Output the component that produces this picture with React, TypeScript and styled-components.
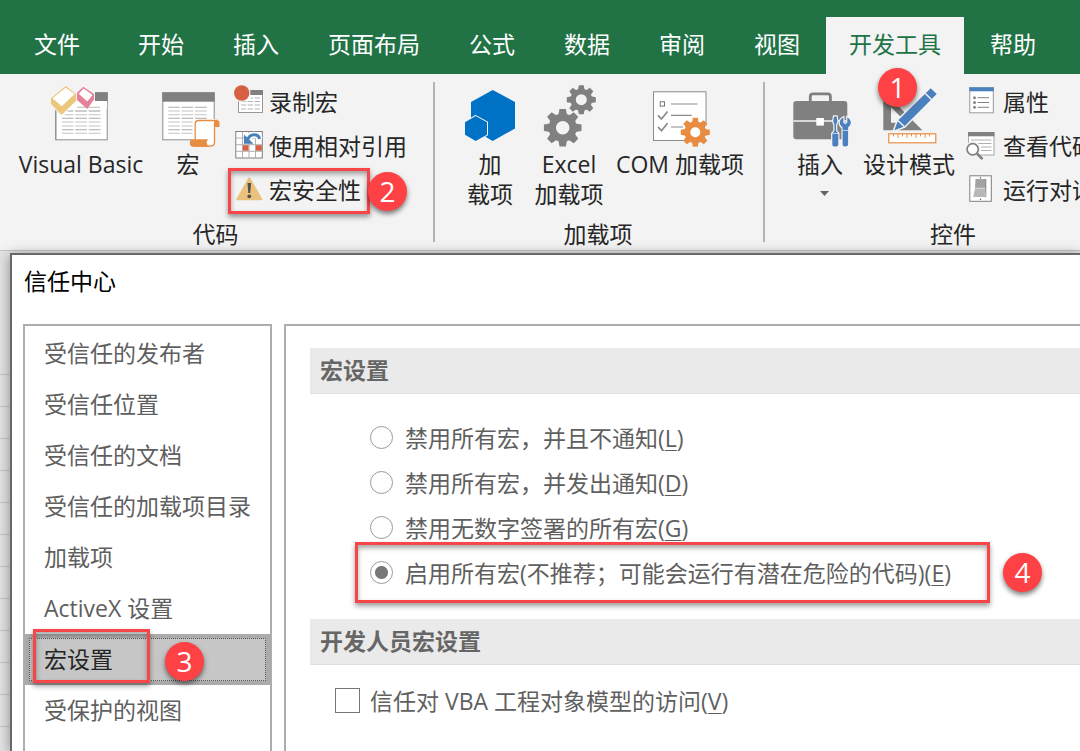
import React, { useState } from 'react';
import styled, { createGlobalStyle, css } from 'styled-components';

const GlobalStyle = createGlobalStyle`
  *, *::before, *::after { box-sizing: border-box; }
  body {
    margin: 0;
    overflow: hidden;
    font-family: "Open Sans", "Noto Sans CJK SC", sans-serif;
    font-size: 23px;
    line-height: 30px;
    color: #262626;
  }
  button { font: inherit; color: inherit; background: none; border: 0; padding: 0; margin: 0; cursor: pointer; }
  svg { display: block; overflow: visible; flex: none; }
`;

const gray = '#808080';
const blue = '#4a80bd';
const orange = '#e88c42';
const red = '#fe4145';

const Page = styled.div`
  display: flex;
  flex-direction: column;
  min-height: 100vh;
  overflow: hidden;
`;

const TabBar = styled.nav`
  display: flex;
  gap: 3px;
  padding: 17px 0 0 11px;
  background: #217346;
`;

const Tab = styled.button<{ $active?: boolean; $file?: boolean }>`
  height: 57px;
  padding: 0 23px 4px;
  margin-right: ${p => (p.$file ? 9 : 0)}px;
  white-space: nowrap;
  color: ${p => (p.$active ? '#217346' : '#fff')};
  background: ${p => (p.$active ? '#f3f3f3' : 'transparent')};
`;

const Ribbon = styled.div`
  display: flex;
  padding: 6px 0 1px;
  background: #f3f3f3;
  border-bottom: 1px solid #c4c4c4;
`;

const Group = styled.section<{ $start: number; $end?: number }>`
  flex: none;
  display: flex;
  flex-direction: column;
  padding: 0 ${p => p.$end ?? 0}px 0 ${p => p.$start}px;
`;

const Divider = styled.div`
  flex: none;
  width: 2px;
  margin: 2px 0 7px;
  background: #b4b4b4;
`;

const GroupTools = styled.div`
  display: flex;
  height: 139px;
`;

const GroupName = styled.h2<{ $pad: number }>`
  margin: 0;
  padding-right: ${p => p.$pad}px;
  font-size: 23px;
  font-weight: 400;
  text-align: center;
`;

const LargeTool = styled.button<{ $width: number }>`
  position: relative;
  width: ${p => p.$width}px;
  padding-top: 4px;
  display: flex;
  flex-direction: column;
  align-items: center;
  justify-content: flex-start;
  white-space: nowrap;
`;

const LargeLabel = styled.span`
  margin-top: -1px;
`;

const ArrowSlot = styled.span`
  display: flex;
  padding: 12px 0 0 8px;
`;

const ToolList = styled.div<{ $width: number }>`
  width: ${p => p.$width}px;
  padding-left: 10px;
  display: flex;
  flex-direction: column;
  align-items: flex-start;
`;

const SmallTool = styled.button`
  position: relative;
  height: 44px;
  display: flex;
  align-items: center;
  gap: 5px;
  white-space: nowrap;
`;

const Outline = styled.span<{ $inset: string }>`
  position: absolute;
  inset: ${p => p.$inset};
  border: 3px solid #f84648;
  box-shadow: 0 3px 5px rgba(0, 0, 0, 0.4), inset 0 3px 5px rgba(0, 0, 0, 0.35);
  pointer-events: none;
`;

const Badge = styled.span<{ $left: string; $top: string }>`
  position: absolute;
  left: ${p => p.$left};
  top: ${p => p.$top};
  z-index: 2;
  width: 39px;
  height: 39px;
  border-radius: 50%;
  display: flex;
  align-items: center;
  justify-content: center;
  background: ${red};
  box-shadow: 0 3px 5px rgba(0, 0, 0, 0.5);
  color: #fff;
  font-size: 28px;
  line-height: 39px;
  pointer-events: none;
`;

const Workspace = styled.div`
  flex: 1;
  display: flex;
  padding: 2px 0 0 10px;
  background:
    linear-gradient(#e3e3e3, #e3e3e3) 0 0 / 100% 110px no-repeat,
    repeating-linear-gradient(to bottom, #e3e3e3 0 27px, #c8c8c8 27px 28px, #e3e3e3 28px 32px);
`;

const Dialog = styled.main`
  position: relative;
  flex: 1;
  min-width: 0;
  display: flex;
  flex-direction: column;
  border: solid #686868;
  border-width: 2px 0 0 2px;
  background: #fff;
  box-shadow: 0 2px 12px rgba(0, 0, 0, 0.4);
`;

const DialogTitle = styled.h1`
  margin: 0;
  padding: 11px 12px 28px;
  font-size: 23px;
  font-weight: 400;
  color: #000;
`;

const DialogBody = styled.div`
  flex: 1;
  display: flex;
  gap: 12px;
  padding-left: 11px;
`;

const Sidebar = styled.div`
  flex: none;
  width: 249px;
  padding-top: 2px;
  display: flex;
  flex-direction: column;
  border: solid #adadad;
  border-width: 2px 2px 0;
`;

const SidebarItem = styled.button<{ $selected: boolean }>`
  position: relative;
  height: 51px;
  padding: 0 0 2px 19px;
  text-align: left;
  color: #5f5f5f;
  ${p => p.$selected && css`
    color: #262626;
    background: #c6c6c6;
    box-shadow: inset 0 0 0 4px #ababab;
    &::before {
      content: "";
      position: absolute;
      inset: 4px;
      border: 1px dotted #555;
    }
  `}
`;

const Panel = styled.div`
  flex: 1;
  min-width: 0;
  padding: 22px 0 0 24px;
  border: solid #adadad;
  border-width: 2px 0 0 2px;
`;

const SectionTitle = styled.h2`
  margin: 0;
  padding: 7px 10px 8px;
  font-size: 23px;
  font-weight: 700;
  color: #666;
  background: #eaeaea;
  border-bottom: 1px solid #e0e0e0;
`;

const RadioList = styled.div`
  display: flex;
  flex-direction: column;
  align-items: flex-start;
  padding: 21px 0 24px 60px;
`;

const Option = styled.label<{ $gap: number }>`
  position: relative;
  height: 45px;
  display: flex;
  align-items: center;
  gap: ${p => p.$gap}px;
  white-space: nowrap;
  color: #5f5f5f;
  u { text-decoration-thickness: 1px; text-underline-offset: 3px; }
`;

const Radio = styled.input`
  appearance: none;
  flex: none;
  width: 23px;
  height: 23px;
  margin: 0;
  border: 1px solid #9a9a9a;
  border-radius: 50%;
  background: #fff;
  &:checked { background: radial-gradient(circle, #777 0 6px, #fff 7px); }
`;

const Checkbox = styled.input`
  appearance: none;
  flex: none;
  width: 25px;
  height: 25px;
  margin: 0;
  border: 1px solid #777;
  background: #fff;
  &:checked { background: #777; box-shadow: inset 0 0 0 5px #fff; }
`;

const CheckRow = styled.div`
  display: flex;
  padding: 13px 0 0 25px;
`;

const Large = ({ children }: { children: React.ReactNode }) => (
  <svg width="64" height="66" viewBox="0 0 64 66" aria-hidden="true">{children}</svg>
);

const Small = ({ children }: { children: React.ReactNode }) => (
  <svg width="30" height="30" viewBox="0 0 30 30" aria-hidden="true">{children}</svg>
);

const Gear = ({ cx, cy, r, hole, fill }: { cx: number; cy: number; r: number; hole: number; fill: string }) => (
  <g transform={`translate(${cx} ${cy}) scale(${r / 10})`}>
    <circle r={(7.5 + (hole * 10) / r) / 2} fill="none" stroke={fill} strokeWidth={7.5 - (hole * 10) / r} />
    {[0, 45, 90, 135, 180, 225, 270, 315].map(a => (
      <path key={a} d="M-2.3 -6.7 L-1.7 -10 H1.7 L2.3 -6.7Z" fill={fill} transform={`rotate(${a})`} />
    ))}
  </g>
);

const SheetLines = ({ x }: { x: number }) => (
  <g strokeWidth="1.1">
    {[23.3, 27, 30.7, 34.3, 38, 42, 45.7, 49.3].map((y, i) => (
      <path key={y} stroke={i % 3 === 0 ? '#aaa' : '#c4c4c4'} d={`M${x} ${y}h11.5m1.7 0h11.8m1.7 0h11.8`} />
    ))}
  </g>
);

const Sheet = () => (
  <>
    <rect x="6.8" y="8.8" width="51.4" height="47" fill="#fff" stroke="#8c8c8c" />
    <rect x="6.3" y="8.3" width="52.4" height="9.4" fill={gray} />
  </>
);

const VisualBasicIcon = () => (
  <Large>
    <Sheet />
    <SheetLines x={13} />
    <path d="M0 0H46V18H28L13 33 1 22Z" fill="#f3f3f3" />
    <path d="M7 22v-2h20v-3h31v8H23L12.7 33Z" fill="#fff" />
    <path d="M28 23.3h10M39.7 23.3H51M18 27h6M26 27h12M39.7 27H51" stroke="#bbb" strokeWidth="1.1" />
    <path d="M16.7 2 27 10v6.7L12.7 31 2 20v-5.7Z" fill="#ecc67a" />
    <path d="M16.7 3.7 25.7 10 12.7 22.3 3.5 14.3Z" fill="#fff" />
    <path d="M34.3 2.7 45 10v5.3L38.3 25 28 16V8.7Z" fill="#e68098" />
    <path d="M34.6 4.5 43.5 11 38.3 17.5 29.7 9.7Z" fill="#fff" />
    <path d="M6.8 26v30" stroke="#8c8c8c" />
  </Large>
);

const MacroIcon = () => (
  <Large>
    <Sheet />
    <SheetLines x={12.3} />
    <path d="M36.5 35H60v29H36.5Z" fill="#fff" />
    <path d="M59 34h6v30H33V56.5h26Z" fill="#f3f3f3" />
    <path d="M39.2 55.5V40q0-3.5 3.5-3.5H60q-1.5 1-1.5 3.5V58q0 4.2-4.5 4.2H38Z" fill="#fff" stroke={orange} strokeWidth="1.3" />
    <path d="M59 36h1.5q3 0 3 3v4H58.5V39q0-2 .5-3Z" fill={orange} />
    <path d="M37 55.3H52q-2 2.5-1 4.7t3 2.7H37q-3.2 0-3.2-3.7t3.2-3.7Z" fill={orange} />
  </Large>
);

const AddinsIcon = () => (
  <Large>
    <path d="M34.7 6 57 18v26.5L34.7 57 13 44.5V18Z" fill="#0072c6" />
    <path d="M17.7 32 29 38.3v12.4L17.7 57 7 50.7V38.3Z" fill="#0072c6" stroke="#f3f3f3" strokeWidth="2" paintOrder="stroke" />
  </Large>
);

const ExcelAddinsIcon = () => (
  <Large>
    <Gear cx={25.7} cy={43.7} r={18.8} hole={6.8} fill={gray} />
    <Gear cx={44.3} cy={15.7} r={14.5} hole={5.5} fill={gray} />
  </Large>
);

const ComAddinsIcon = () => (
  <Large>
    <rect x="5.5" y="7.8" width="52.5" height="48.7" fill="#fff" stroke="#8c8c8c" />
    <rect x="12.2" y="17.8" width="4.3" height="4.3" fill="none" stroke="#777" />
    <path d="M23 20h26.5M23 31.3h20.7M23 43h12" stroke="#8c8c8c" strokeWidth="1.2" />
    <path d="m10 31.3 3.5 3.7 6-7.5M10 43l3.5 3.7 6-7.5" fill="none" stroke="#8c8c8c" strokeWidth="1.8" />
    <circle cx="47.3" cy="48.3" r="13" fill="#fff" />
    <path d="M58.5 40h4v20H40v-3h18.5Z" fill="#f3f3f3" />
    <Gear cx={47.3} cy={48.3} r={14.5} hole={5} fill={orange} />
  </Large>
);

const InsertIcon = () => (
  <Large>
    <path d="M22.3 18v-5.5q0-2.7 2.7-2.7h14.7q2.7 0 2.7 2.7V18" fill="none" stroke={gray} strokeWidth="2.8" />
    <rect x="5.3" y="17" width="54" height="38.3" rx="3" fill={gray} />
    <path d="M5.3 37h54" stroke="#f3f3f3" strokeWidth="1.6" />
    <rect x="28.3" y="34" width="7.6" height="7.6" fill="#fff" />
    <g fill={blue} stroke="#f3f3f3" strokeWidth="2.4" paintOrder="stroke">
      <path d="M46 32.5h2.6l.8 5-1.3 3v6.5l2.2 2.5v11q0 2-2 2h-2q-2 0-2-2v-11l2.2-2.5v-6.5l-1.3-3Z" />
      <path d="M55.3 33.5v5.2l2 1.5 2-1.5v-5.2q3.5 1.8 3.5 5.3 0 3-2.7 4.8V60q0 2.5-2.8 2.5T54.6 60V43.6q-2.9-1.8-2.9-4.8 0-3.5 3.6-5.3Z" />
    </g>
    <path d="M44.3 49.5h6M55 46.5h5" stroke="#f3f3f3" strokeWidth=".7" />
  </Large>
);

const DesignIcon = () => (
  <Large>
    <path fillRule="evenodd" d="M6.3 7v39.3h39ZM14 23v15.7h15.5Z" fill={gray} />
    <path d="M53.7 4.3 59.7 10 27.3 42.5 17.3 46.3 21 36.5Z" fill={blue} stroke="#f3f3f3" strokeWidth="3" paintOrder="stroke" />
    <path d="m48.4 9.5 6 6M20.8 36.5l6.5 6" stroke="#f3f3f3" strokeWidth="1.5" />
    <rect x="11.8" y="49.8" width="47" height="9" fill="#fff" stroke={orange} strokeWidth="1.2" />
    <path d="M16.5 50v2.5M21 50v4M25.5 50v2.5M30 50v4M34.5 50v2.5M39 50v4M43.5 50v2.5M48 50v4M52.5 50v2.5" stroke={orange} />
  </Large>
);

const RecordIcon = () => (
  <Small>
    <rect x="4.5" y="3.5" width="24" height="22" fill="#fff" stroke="#999" />
    <rect x="16" y="3" width="13" height="5" fill={gray} />
    <path d="M7 14.5h5m1.5 0h5.5m1.5 0h5.5M7 18h5m1.5 0h5.5m1.5 0h5.5M7 22h5m1.5 0h5.5m1.5 0h5.5M17 11h2m1.5 0h5.5" stroke="#b4b4b4" />
    <circle cx="7.7" cy="6" r="8.8" fill="#f3f3f3" />
    <circle cx="7.7" cy="6" r="7.7" fill="#d75f42" />
  </Small>
);

const RelativeIcon = () => (
  <Small>
    <rect x="1.8" y="0.5" width="26.5" height="26.5" fill="#fff" stroke={gray} />
    <path d="M8.5 1v26M15 1v26M21.5 1v26M2 7h26M2 13.7h26M2 20.3h26" stroke="#b0b0b0" />
    <rect x="9" y="14.2" width="5.5" height="5.5" fill="#d75f42" />
    <rect x="22" y="14.2" width="5.8" height="5.5" fill="#d75f42" />
    <path d="M13 10Q15 3.8 20 3.8T25.5 8" fill="none" stroke="#fff" strokeWidth="6" />
    <path d="M13 10Q15 3.8 20 3.8T25.5 8" fill="none" stroke={blue} strokeWidth="3" />
    <path d="M10 3.5v9.2h9.5Z" fill={blue} />
  </Small>
);

const WarningIcon = () => (
  <Small>
    <path d="M15.3 3.3 27.3 24.3H3.3Z" fill="#eac27e" stroke="#eac27e" strokeWidth="2" strokeLinejoin="round" />
    <path d="M13.5 8h3.6l-.8 10h-2Z" fill="#505050" />
    <circle cx="15.3" cy="21.3" r="1.9" fill="#505050" />
  </Small>
);

const PropertiesIcon = () => (
  <Small>
    <rect x="1.8" y=".8" width="23.5" height="25" fill="#fff" stroke="#999" />
    <rect x="1.3" y=".3" width="24.5" height="4" fill={blue} />
    <path d="M9.5 10.7H21M9.5 15.5H21M9.5 20.3H21" stroke={gray} />
    <g fill="#888"><circle cx="6.5" cy="10.7" r="1.5" /><circle cx="6.5" cy="15.5" r="1.5" /><circle cx="6.5" cy="20.3" r="1.5" /></g>
  </Small>
);

const ViewCodeIcon = () => (
  <Small>
    <rect x=".5" y="1.5" width="25.5" height="22.5" fill="#fff" stroke="#a5a5a5" />
    <rect x="0" y="1" width="26.5" height="4.3" fill={gray} />
    <path d="M3 9h20.5M10 12.5h13.5M13 16h10.5M13 19.5h10.5" stroke="#b0b0b0" />
    <circle cx="4.7" cy="18.3" r="8" fill="#f3f3f3" />
    <path d="m9 22.6 5.5 5.5" stroke={gray} strokeWidth="2.6" />
    <circle cx="4.7" cy="18.3" r="5.6" fill="#fff" stroke={gray} strokeWidth="1.7" />
  </Small>
);

const RunDialogIcon = () => (
  <Small>
    <rect x="1.8" y=".8" width="21.5" height="25.5" fill="#fff" stroke={gray} />
    <path d="M7.5 4h10.3v10H7Z" fill="#a3a3a3" />
    <path d="M7 13.2h10.8L16.5 22H5.2Z" fill="#b8b8b8" />
    <path d="M6.5 13.3h11.3" stroke="#ddd" />
    <path d="M17.8 4v17.5h-1.3" fill="none" stroke="#777" strokeWidth=".8" />
    <circle cx="12.5" cy="2.7" r=".7" fill="#555" /><circle cx="12.5" cy="24.3" r=".7" fill="#555" />
  </Small>
);

const tabs = ['文件', '开始', '插入', '页面布局', '公式', '数据', '审阅', '视图', '开发工具', '帮助'];
const categories = ['受信任的发布者', '受信任位置', '受信任的文档', '受信任的加载项目录', '加载项', 'ActiveX 设置', '宏设置', '受保护的视图'];
const macroOptions = [
  { key: 'L', text: '禁用所有宏，并且不通知' },
  { key: 'D', text: '禁用所有宏，并发出通知' },
  { key: 'G', text: '禁用无数字签署的所有宏' },
  { key: 'E', text: '启用所有宏(不推荐；可能会运行有潜在危险的代码)' },
];

export default function App() {
  const [category, setCategory] = useState('宏设置');
  const [policy, setPolicy] = useState('E');

  return (
    <Page>
      <GlobalStyle />
      <TabBar>
        {tabs.map(t => <Tab key={t} $file={t === '文件'} $active={t === '开发工具'}>{t}</Tab>)}
      </TabBar>

      <Ribbon>
        <Group $start={10}>
          <GroupTools>
            <LargeTool $width={142}><VisualBasicIcon /><LargeLabel>Visual Basic</LargeLabel></LargeTool>
            <LargeTool $width={72}><MacroIcon /><LargeLabel>宏</LargeLabel></LargeTool>
            <ToolList $width={209}>
              <SmallTool><RecordIcon />录制宏</SmallTool>
              <SmallTool><RelativeIcon />使用相对引用</SmallTool>
              <SmallTool>
                <WarningIcon />宏安全性
                <Outline $inset="0 -9px -2px -6px" />
                <Badge $left="calc(100% + 7px)" $top="4px">2</Badge>
              </SmallTool>
            </ToolList>
          </GroupTools>
          <GroupName $pad={12}>代码</GroupName>
        </Group>
        <Divider />
        <Group $start={15} $end={11}>
          <GroupTools>
            <LargeTool $width={80}><AddinsIcon /><LargeLabel>加<br />载项</LargeLabel></LargeTool>
            <LargeTool $width={78}><ExcelAddinsIcon /><LargeLabel>Excel<br />加载项</LargeLabel></LargeTool>
            <LargeTool $width={144}><ComAddinsIcon /><LargeLabel>COM 加载项</LargeLabel></LargeTool>
          </GroupTools>
          <GroupName $pad={6}>加载项</GroupName>
        </Group>
        <Divider />
        <Group $start={15}>
          <GroupTools>
            <LargeTool $width={80}>
              <InsertIcon />
              <LargeLabel>插入</LargeLabel>
              <ArrowSlot><svg width="9" height="5" viewBox="0 0 9 5" aria-hidden="true"><path d="M0 0h9L4.5 5Z" fill="#666" /></svg></ArrowSlot>
            </LargeTool>
            <LargeTool $width={98}>
              <DesignIcon />
              <LargeLabel>设计模式</LargeLabel>
              <Badge $left="18px" $top="-12px">1</Badge>
            </LargeTool>
            <ToolList $width={168}>
              <SmallTool><PropertiesIcon />属性</SmallTool>
              <SmallTool><ViewCodeIcon />查看代码</SmallTool>
              <SmallTool><RunDialogIcon />运行对话框</SmallTool>
            </ToolList>
          </GroupTools>
          <GroupName $pad={0}>控件</GroupName>
        </Group>
      </Ribbon>

      <Workspace>
        <Dialog>
          <DialogTitle>信任中心</DialogTitle>
          <DialogBody>
            <Sidebar>
              {categories.map(c => (
                <SidebarItem key={c} $selected={c === category} onClick={() => setCategory(c)}>
                  {c}
                  {c === '宏设置' && (
                    <>
                      <Outline $inset="-5px 120px 2px 8px" />
                      <Badge $left="140px" $top="8px">3</Badge>
                    </>
                  )}
                </SidebarItem>
              ))}
            </Sidebar>
            <Panel>
              <SectionTitle>宏设置</SectionTitle>
              <RadioList role="radiogroup" aria-label="宏设置">
                {macroOptions.map(o => (
                  <Option key={o.key} $gap={12}>
                    <Radio type="radio" name="policy" checked={policy === o.key} onChange={() => setPolicy(o.key)} />
                    <span>{o.text}(<u>{o.key}</u>)</span>
                    {o.key === 'E' && (
                      <>
                        <Outline $inset="-8px -39px -8px -15px" />
                        <Badge $left="calc(100% + 52px)" $top="3px">4</Badge>
                      </>
                    )}
                  </Option>
                ))}
              </RadioList>
              <SectionTitle>开发人员宏设置</SectionTitle>
              <CheckRow>
                <Option $gap={10}>
                  <Checkbox type="checkbox" />
                  <span>信任对 VBA 工程对象模型的访问(<u>V</u>)</span>
                </Option>
              </CheckRow>
            </Panel>
          </DialogBody>
        </Dialog>
      </Workspace>
    </Page>
  );
}
